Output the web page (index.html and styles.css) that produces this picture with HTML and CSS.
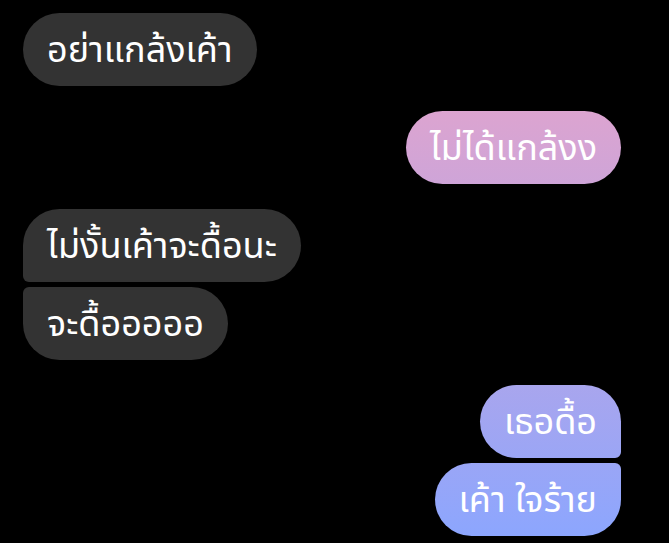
FILE: index.html
```html
<!DOCTYPE html>
<html lang="th">
<head>
<meta charset="utf-8">
<link rel="stylesheet" href="styles.css">
</head>
<body>
<div class="chat">
  <div class="group in">
    <div class="bubble">อย่าแกล้งเค้า</div>
  </div>
  <div class="group out">
    <div class="bubble">ไม่ได้แกล้งง</div>
  </div>
  <div class="group in">
    <div class="bubble first">ไม่งั้นเค้าจะดื้อนะ</div>
    <div class="bubble last">จะดื้อออออ</div>
  </div>
  <div class="group out">
    <div class="bubble first">เธอดื้อ</div>
    <div class="bubble last">เค้า ใจร้าย</div>
  </div>
</div>
</body>
</html>
```
FILE: styles.css
```css
html, body {
  margin: 0;
  padding: 0;
  background: #000;
}
body {
  width: 669px;
  height: 543px;
  overflow: hidden;
  font-family: "Noto Sans Thai", "Noto Sans", sans-serif;
}
.chat {
  display: flex;
  flex-direction: column;
  gap: 25px;
  padding: 13px 48px 0 23px;
}
.group {
  display: flex;
  flex-direction: column;
  gap: 5px;
}
.group.in { align-items: flex-start; }
.group.out { align-items: flex-end; }
.bubble {
  box-sizing: border-box;
  height: 73px;
  display: flex;
  align-items: center;
  padding: 3px 24px 0 24px;
  border-radius: 37px;
  color: #fff;
  font-size: 36px;
  white-space: nowrap;
}
.in .bubble { background: #333333; }
.out .bubble {
  background: linear-gradient(180deg, #dca4d0 111px, #8ca6fe 537px) fixed;
}
.in .first { border-bottom-left-radius: 6px; }
.in .last { border-top-left-radius: 6px; }
.out .first { border-bottom-right-radius: 6px; }
.out .last { border-top-right-radius: 6px; }
```
